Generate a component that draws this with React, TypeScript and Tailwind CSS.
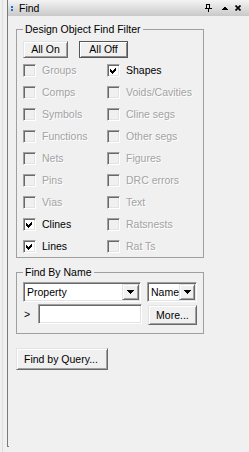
import React from 'react'

const raised =
  'border border-t-[#e3e3e3] border-l-[#e3e3e3] border-r-[#696969] border-b-[#696969] shadow-[inset_1px_1px_0_#fff,inset_-1px_-1px_0_#a0a0a0] bg-[#f0f0f0]'
const sunken =
  'border border-t-[#a0a0a0] border-l-[#a0a0a0] border-r-white border-b-white shadow-[inset_1px_1px_0_#696969,inset_-1px_-1px_0_#e3e3e3]'

function DownArrow() {
  return (
    <svg width="7" height="4" viewBox="0 0 7 4" shapeRendering="crispEdges">
      <polygon points="0,0 7,0 3.5,4" fill="#000" />
    </svg>
  )
}

function Check({ label, checked = false, disabled = false }: { label: string; checked?: boolean; disabled?: boolean }) {
  return (
    <div className="h-[22px] flex items-center">
      <span
        className={`${sunken} w-[13px] h-[13px] flex items-center justify-center ${disabled ? 'bg-[#f0f0f0]' : 'bg-white'}`}
      >
        {checked && (
          <svg width="7" height="7" viewBox="0 0 7 7" shapeRendering="crispEdges">
            <polygon points="0,2 2,4 6,0 6,3 2,7 0,5" fill="#000" />
          </svg>
        )}
      </span>
      <span
        className={`ml-[6px] whitespace-nowrap ${
          disabled ? 'text-[#a3a3a3] [text-shadow:1px_1px_0_#fff]' : 'text-black'
        }`}
      >
        {label}
      </span>
    </div>
  )
}

const items: { label: string; checked?: boolean; disabled?: boolean }[] = [
  { label: 'Groups', disabled: true },
  { label: 'Shapes', checked: true },
  { label: 'Comps', disabled: true },
  { label: 'Voids/Cavities', disabled: true },
  { label: 'Symbols', disabled: true },
  { label: 'Cline segs', disabled: true },
  { label: 'Functions', disabled: true },
  { label: 'Other segs', disabled: true },
  { label: 'Nets', disabled: true },
  { label: 'Figures', disabled: true },
  { label: 'Pins', disabled: true },
  { label: 'DRC errors', disabled: true },
  { label: 'Vias', disabled: true },
  { label: 'Text', disabled: true },
  { label: 'Clines', checked: true },
  { label: 'Ratsnests', disabled: true },
  { label: 'Lines', checked: true },
  { label: 'Rat Ts', disabled: true },
]

export default function App() {
  return (
    <div className="w-[249px] h-[452px] bg-[#f0f0f0] flex font-['Liberation_Sans',Arial,sans-serif] text-[10.5px] leading-[13px] text-black overflow-hidden">
      {/* outer left edge */}
      <div className="w-[7px] h-full">
        <div className="ml-[2px] w-px h-full bg-[#dedede]" />
      </div>

      {/* docked panel */}
      <div className="flex-1 h-[447px] border-l border-[#7a7a7a] flex flex-col">
        {/* title bar */}
        <div className="h-[16px] flex items-center bg-[linear-gradient(to_bottom,#f4f4f4,#c9c9c9)]">
          <div className="ml-[3px] flex flex-col gap-[1px]">
            <span className="w-[2px] h-[2px] bg-[#1a6fd4]" />
            <span className="w-[2px] h-[2px] bg-[#1a6fd4]" />
          </div>
          <span className="ml-[6px] text-[10.5px]">Find</span>
          <div className="ml-auto flex items-center pr-[8px]">
            <svg width="7" height="8" viewBox="0 0 7 8" shapeRendering="crispEdges">
              <rect x="1.5" y="0.5" width="3" height="4" fill="none" stroke="#000" />
              <rect x="4" y="0" width="1" height="5" fill="#000" />
              <rect x="0" y="4" width="7" height="1" fill="#000" />
              <rect x="3" y="5" width="1" height="3" fill="#000" />
            </svg>
            <svg className="ml-[10px]" width="6" height="4" viewBox="0 0 6 4" shapeRendering="crispEdges">
              <polygon points="3,0 6,3.5 0,3.5" fill="#000" />
            </svg>
            <svg className="ml-[7px]" width="6" height="6" viewBox="0 0 6 6">
              <path d="M0.5 0.5 L5.5 5.5 M5.5 0.5 L0.5 5.5" stroke="#000" strokeWidth="1.7" />
            </svg>
          </div>
        </div>

        {/* content */}
        <div className="pl-[8px] flex flex-col items-start">
          <fieldset className="mt-[7px] w-[188px] border border-[#a0a0a0] min-w-0">
            <legend className="ml-[6px] px-[2px] leading-[13px]">Design Object Find Filter</legend>
            <div className="px-[6px] pt-[5px]">
              <div className="flex gap-[11px]">
                <button className={`${raised} w-[45px] h-[17px] leading-none`}>All On</button>
                <button className="w-[49px] h-[17px] leading-none bg-[#f0f0f0] border border-[#555] shadow-[inset_1px_1px_0_#fff,inset_-1px_-1px_0_#8a8a8a]">
                  All Off
                </button>
              </div>
              <div className="mt-[1px] grid grid-cols-[84px_1fr]">
                {items.map((it) => (
                  <Check key={it.label} {...it} />
                ))}
              </div>
            </div>
          </fieldset>

          <fieldset className="mt-[8px] w-[188px] border border-[#a0a0a0] min-w-0">
            <legend className="ml-[6px] px-[2px] leading-[13px]">Find By Name</legend>
            <div className="px-[6px] pt-[3px] pb-[8px]">
              <div className="flex gap-[6px]">
                <div className={`${sunken} bg-white w-[121px] h-[20px] flex items-center p-[1px]`}>
                  <span className="flex-1 pl-[2px]">Property</span>
                  <span className={`${raised} w-[17px] h-full flex items-center justify-center`}>
                    <DownArrow />
                  </span>
                </div>
                <div className={`${sunken} bg-white w-[50px] h-[20px] flex items-center p-[1px]`}>
                  <span className="flex-1 pl-[2px]">Name</span>
                  <span className={`${raised} w-[16px] h-full flex items-center justify-center`}>
                    <DownArrow />
                  </span>
                </div>
              </div>
              <div className="mt-[2px] flex items-start">
                <span className="w-[15px] h-[20px] flex items-center pl-[1px]">&gt;</span>
                <div className={`${sunken} bg-white w-[106px] h-[20px]`} />
                <button className={`${raised} ml-[6px] mt-[1px] w-[50px] h-[20px] leading-none`}>More...</button>
              </div>
            </div>
          </fieldset>

          <button className={`${raised} mt-[14px] w-[92px] h-[22px] leading-none text-left pl-[7px]`}>
            Find by Query...
          </button>
        </div>

        <div className="mt-auto w-[2px] h-px bg-[#7a7a7a] -ml-px" />
      </div>
    </div>
  )
}
